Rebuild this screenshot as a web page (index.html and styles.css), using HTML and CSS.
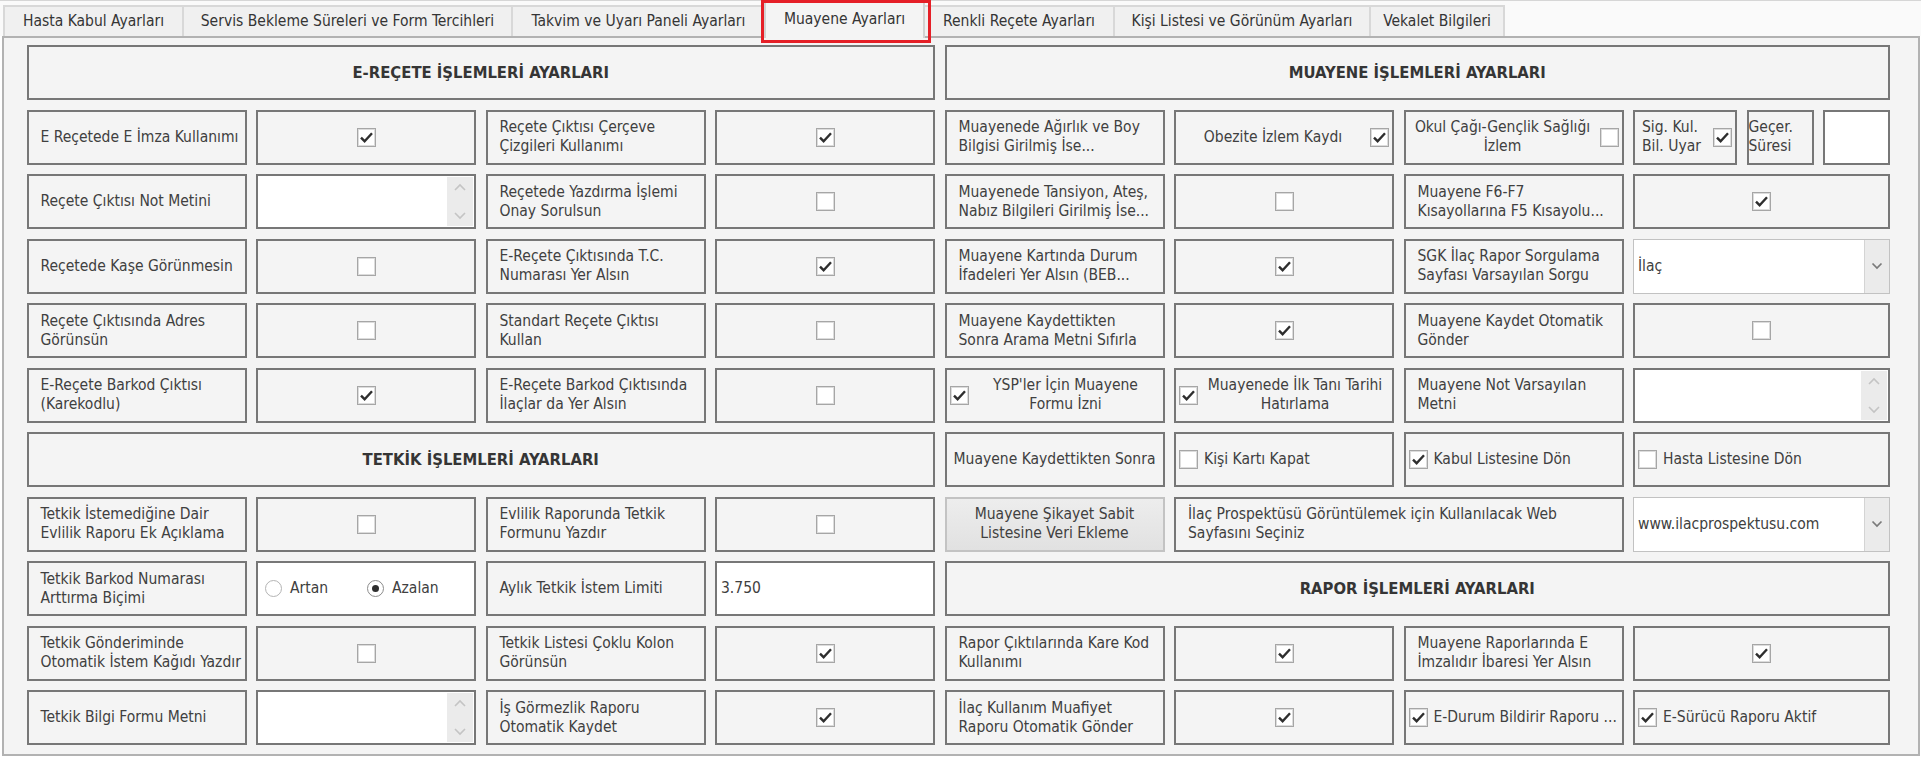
FILE: index.html
```html
<!DOCTYPE html>
<html lang="tr">
<head>
<meta charset="utf-8">
<title>Muayene Ayarları</title>
<link rel="stylesheet" href="styles.css">
</head>
<body>
<div class="tabs">
  <div class="tab t1">Hasta Kabul Ayarları</div>
  <div class="tab t2">Servis Bekleme Süreleri ve Form Tercihleri</div>
  <div class="tab t3">Takvim ve Uyarı Paneli Ayarları</div>
  <div class="tab t4 active">Muayene Ayarları</div>
  <div class="tab t5">Renkli Reçete Ayarları</div>
  <div class="tab t6">Kişi Listesi ve Görünüm Ayarları</div>
  <div class="tab t7">Vekalet Bilgileri</div>
</div>
<div class="highlight"></div>
<div class="panel">
  <div class="grid">
    <!-- row 0 -->
    <div class="c hd">E-REÇETE İŞLEMLERİ AYARLARI</div>
    <div class="c hd">MUAYENE İŞLEMLERİ AYARLARI</div>

    <!-- row 1 -->
    <div class="c lbl">E Reçetede E İmza Kullanımı</div>
    <div class="c val"><span class="cb on"><svg viewBox="0 0 15 15"><path d="M2 7.6 5.6 11.2 13 3.2"/></svg></span></div>
    <div class="c lbl">Reçete Çıktısı Çerçeve<br>Çizgileri Kullanımı</div>
    <div class="c val"><span class="cb on"><svg viewBox="0 0 15 15"><path d="M2 7.6 5.6 11.2 13 3.2"/></svg></span></div>
    <div class="c lbl">Muayenede Ağırlık ve Boy<br>Bilgisi Girilmiş İse...</div>
    <div class="c cbr"><span class="txt">Obezite İzlem Kaydı</span><span class="cb on"><svg viewBox="0 0 15 15"><path d="M2 7.6 5.6 11.2 13 3.2"/></svg></span></div>
    <div class="c cbr"><span class="txt">Okul Çağı-Gençlik Sağlığı<br>İzlem</span><span class="cb"></span></div>
    <div class="split">
      <div class="c cbr sig"><span class="txt start">Sig. Kul.<br>Bil. Uyar</span><span class="cb on"><svg viewBox="0 0 15 15"><path d="M2 7.6 5.6 11.2 13 3.2"/></svg></span></div>
      <div class="c gec">Geçer.<br>Süresi</div>
      <div class="c input"></div>
    </div>

    <!-- row 2 -->
    <div class="c lbl">Reçete Çıktısı Not Metini</div>
    <div class="c ta"><div class="sb"><svg class="chev" viewBox="0 0 12 8"><path d="M1 7 6 2 11 7"/></svg><svg class="chev" viewBox="0 0 12 8"><path d="M1 1 6 6 11 1"/></svg></div></div>
    <div class="c lbl">Reçetede Yazdırma İşlemi<br>Onay Sorulsun</div>
    <div class="c val"><span class="cb"></span></div>
    <div class="c lbl">Muayenede Tansiyon, Ateş,<br>Nabız Bilgileri Girilmiş İse...</div>
    <div class="c val"><span class="cb"></span></div>
    <div class="c lbl">Muayene F6-F7<br>Kısayollarına F5 Kısayolu...</div>
    <div class="c val"><span class="cb on"><svg viewBox="0 0 15 15"><path d="M2 7.6 5.6 11.2 13 3.2"/></svg></span></div>

    <!-- row 3 -->
    <div class="c lbl">Reçetede Kaşe Görünmesin</div>
    <div class="c val"><span class="cb"></span></div>
    <div class="c lbl">E-Reçete Çıktısında T.C.<br>Numarası Yer Alsın</div>
    <div class="c val"><span class="cb on"><svg viewBox="0 0 15 15"><path d="M2 7.6 5.6 11.2 13 3.2"/></svg></span></div>
    <div class="c lbl">Muayene Kartında Durum<br>İfadeleri Yer Alsın (BEB...</div>
    <div class="c val"><span class="cb on"><svg viewBox="0 0 15 15"><path d="M2 7.6 5.6 11.2 13 3.2"/></svg></span></div>
    <div class="c lbl">SGK İlaç Rapor Sorgulama<br>Sayfası Varsayılan Sorgu</div>
    <div class="combo"><span class="ctext">İlaç</span><span class="dd"><svg class="dchev" viewBox="0 0 12 8"><path d="M1.5 1.5 6 6 10.5 1.5"/></svg></span></div>

    <!-- row 4 -->
    <div class="c lbl">Reçete Çıktısında Adres<br>Görünsün</div>
    <div class="c val"><span class="cb"></span></div>
    <div class="c lbl">Standart Reçete Çıktısı<br>Kullan</div>
    <div class="c val"><span class="cb"></span></div>
    <div class="c lbl">Muayene Kaydettikten<br>Sonra Arama Metni Sıfırla</div>
    <div class="c val"><span class="cb on"><svg viewBox="0 0 15 15"><path d="M2 7.6 5.6 11.2 13 3.2"/></svg></span></div>
    <div class="c lbl">Muayene Kaydet Otomatik<br>Gönder</div>
    <div class="c val"><span class="cb"></span></div>

    <!-- row 5 -->
    <div class="c lbl">E-Reçete Barkod Çıktısı<br>(Karekodlu)</div>
    <div class="c val"><span class="cb on"><svg viewBox="0 0 15 15"><path d="M2 7.6 5.6 11.2 13 3.2"/></svg></span></div>
    <div class="c lbl">E-Reçete Barkod Çıktısında<br>İlaçlar da Yer Alsın</div>
    <div class="c val"><span class="cb"></span></div>
    <div class="c cbl"><span class="cb on"><svg viewBox="0 0 15 15"><path d="M2 7.6 5.6 11.2 13 3.2"/></svg></span><span class="txt">YSP'ler İçin Muayene<br>Formu İzni</span></div>
    <div class="c cbl"><span class="cb on"><svg viewBox="0 0 15 15"><path d="M2 7.6 5.6 11.2 13 3.2"/></svg></span><span class="txt">Muayenede İlk Tanı Tarihi<br>Hatırlama</span></div>
    <div class="c lbl">Muayene Not Varsayılan<br>Metni</div>
    <div class="c ta"><div class="sb"><svg class="chev" viewBox="0 0 12 8"><path d="M1 7 6 2 11 7"/></svg><svg class="chev" viewBox="0 0 12 8"><path d="M1 1 6 6 11 1"/></svg></div></div>

    <!-- row 6 -->
    <div class="c hd">TETKİK İŞLEMLERİ AYARLARI</div>
    <div class="c lbl mid">Muayene Kaydettikten Sonra</div>
    <div class="c inl"><span class="cb"></span><span>Kişi Kartı Kapat</span></div>
    <div class="c inl"><span class="cb on"><svg viewBox="0 0 15 15"><path d="M2 7.6 5.6 11.2 13 3.2"/></svg></span><span>Kabul Listesine Dön</span></div>
    <div class="c inl"><span class="cb"></span><span>Hasta Listesine Dön</span></div>

    <!-- row 7 -->
    <div class="c lbl">Tetkik İstemediğine Dair<br>Evlilik Raporu Ek Açıklama</div>
    <div class="c val"><span class="cb"></span></div>
    <div class="c lbl">Evlilik Raporunda Tetkik<br>Formunu Yazdır</div>
    <div class="c val"><span class="cb"></span></div>
    <div class="c btn">Muayene Şikayet Sabit<br>Listesine Veri Ekleme</div>
    <div class="c lbl wide">İlaç Prospektüsü Görüntülemek için Kullanılacak Web<br>Sayfasını Seçiniz</div>
    <div class="combo"><span class="ctext">www.ilacprospektusu.com</span><span class="dd"><svg class="dchev" viewBox="0 0 12 8"><path d="M1.5 1.5 6 6 10.5 1.5"/></svg></span></div>

    <!-- row 8 -->
    <div class="c lbl">Tetkik Barkod Numarası<br>Arttırma Biçimi</div>
    <div class="c radios">
      <span class="ropt"><span class="rb"></span>Artan</span>
      <span class="ropt"><span class="rb sel"></span>Azalan</span>
    </div>
    <div class="c lbl">Aylık Tetkik İstem Limiti</div>
    <div class="c input">3.750</div>
    <div class="c hd">RAPOR İŞLEMLERİ AYARLARI</div>

    <!-- row 9 -->
    <div class="c lbl">Tetkik Gönderiminde<br>Otomatik İstem Kağıdı Yazdır</div>
    <div class="c val"><span class="cb"></span></div>
    <div class="c lbl">Tetkik Listesi Çoklu Kolon<br>Görünsün</div>
    <div class="c val"><span class="cb on"><svg viewBox="0 0 15 15"><path d="M2 7.6 5.6 11.2 13 3.2"/></svg></span></div>
    <div class="c lbl">Rapor Çıktılarında Kare Kod<br>Kullanımı</div>
    <div class="c val"><span class="cb on"><svg viewBox="0 0 15 15"><path d="M2 7.6 5.6 11.2 13 3.2"/></svg></span></div>
    <div class="c lbl">Muayene Raporlarında E<br>İmzalıdır İbaresi Yer Alsın</div>
    <div class="c val"><span class="cb on"><svg viewBox="0 0 15 15"><path d="M2 7.6 5.6 11.2 13 3.2"/></svg></span></div>

    <!-- row 10 -->
    <div class="c lbl">Tetkik Bilgi Formu Metni</div>
    <div class="c ta"><div class="sb"><svg class="chev" viewBox="0 0 12 8"><path d="M1 7 6 2 11 7"/></svg><svg class="chev" viewBox="0 0 12 8"><path d="M1 1 6 6 11 1"/></svg></div></div>
    <div class="c lbl">İş Görmezlik Raporu<br>Otomatik Kaydet</div>
    <div class="c val"><span class="cb on"><svg viewBox="0 0 15 15"><path d="M2 7.6 5.6 11.2 13 3.2"/></svg></span></div>
    <div class="c lbl">İlaç Kullanım Muafiyet<br>Raporu Otomatik Gönder</div>
    <div class="c val"><span class="cb on"><svg viewBox="0 0 15 15"><path d="M2 7.6 5.6 11.2 13 3.2"/></svg></span></div>
    <div class="c inl"><span class="cb on"><svg viewBox="0 0 15 15"><path d="M2 7.6 5.6 11.2 13 3.2"/></svg></span><span>E-Durum Bildirir Raporu ...</span></div>
    <div class="c inl"><span class="cb on"><svg viewBox="0 0 15 15"><path d="M2 7.6 5.6 11.2 13 3.2"/></svg></span><span>E-Sürücü Raporu Aktif</span></div>
  </div>
</div>
</body>
</html>
```
FILE: styles.css
```css
html, body {
  margin: 0;
  padding: 0;
}
body {
  position: relative;
  background: #ffffff;
  font-family: "DejaVu Sans Condensed", "DejaVu Sans", sans-serif;
  font-stretch: condensed;
  font-size: 15.5px;
  line-height: 19px;
  color: #404040;
}

/* ---------- tab strip ---------- */
.tabs {
  display: flex;
  align-items: flex-end;
  height: 35px;
  padding-left: 3px;
  border-top: 1px solid #d6d6d6;
  background: #fafafa;
}
.tab {
  box-sizing: border-box;
  height: 31px;
  display: flex;
  align-items: center;
  justify-content: center;
  white-space: nowrap;
  background: #f0f0f0;
  border: 2px solid #d8d8d8;
  border-right: none;
  border-bottom: none;
  color: #353535;
}
.t1 { width: 179px; }
.t2 { width: 329px; }
.t3 { width: 253px; }
.t4 { width: 161px; }
.t5 { width: 190px; }
.t6 { width: 256px; }
.t7 { width: 136px; border-right: 2px solid #d8d8d8; }
.tab.active {
  position: relative;
  z-index: 1;
  height: 37px;
  margin-bottom: -2px;
  padding-bottom: 2px;
  background: #f4f4f4;
  border-color: #d2d2d2;
  border-right: 2px solid #d2d2d2;
  margin-right: -2px;
}

/* red annotation frame over the active tab */
.highlight {
  position: absolute;
  left: 761px;
  top: 0;
  width: 170px;
  height: 43px;
  box-sizing: border-box;
  border: 3px solid #e51f27;
  z-index: 5;
}

/* ---------- panel ---------- */
.panel {
  box-sizing: border-box;
  width: 1918px;
  height: 720px;
  margin-left: 2px;
  border: 2px solid #b2b2b2;
  background: #f4f4f4;
  padding: 7px 0 0 22.5px;
}
.grid {
  display: grid;
  grid-template-columns: repeat(7, 220px) 257px;
  grid-auto-rows: 55px;
  gap: 9.5px;
}

/* generic bordered cell */
.c {
  box-sizing: border-box;
  border: 2px solid #777777;
  background: #f4f4f4;
  display: flex;
  align-items: center;
  overflow: hidden;
  white-space: nowrap;
}
.hd {
  grid-column: span 4;
  justify-content: center;
  font-weight: bold;
  font-size: 16.5px;
  color: #353535;
}
.lbl {
  padding-left: 12px;
}
.lbl.mid {
  padding-left: 0;
  justify-content: center;
}
.lbl.wide {
  grid-column: span 2;
}
.gec {
  padding-left: 0;
}
.val {
  justify-content: center;
}

/* checkbox */
.cb {
  box-sizing: border-box;
  flex: none;
  width: 19px;
  height: 19px;
  background: #ffffff;
  border: 1px solid #a6a6a6;
  box-shadow: inset 0 0 0 1px #dcdcdc;
  display: flex;
  align-items: center;
  justify-content: center;
}
.cb svg {
  width: 15px;
  height: 15px;
}
.cb svg path {
  fill: none;
  stroke: #2e2e2e;
  stroke-width: 2.4;
}

/* label + checkbox on the right */
.cbr {
  padding-right: 3px;
}
.cbr .txt,
.cbl .txt {
  flex: 1;
  text-align: center;
}
.cbr .txt.start {
  text-align: left;
  padding-left: 7px;
}
.cbl {
  padding-left: 3px;
}

/* inline checkbox + text */
.inl {
  padding-left: 3px;
  gap: 6px;
}

.split {
  display: grid;
  grid-template-columns: 104px 67px 67px;
  gap: 9.5px;
}

/* white inputs */
.input {
  background: #ffffff;
  padding-left: 4px;
}
.ta {
  background: #ffffff;
  justify-content: flex-end;
  align-items: stretch;
  padding: 1px 1px 1px 0;
}
.sb {
  width: 26px;
  background: #ebebeb;
  display: flex;
  flex-direction: column;
  justify-content: space-between;
  align-items: center;
  padding: 6px 0;
  box-sizing: border-box;
}
.chev {
  width: 12px;
  height: 8px;
}
.chev path {
  fill: none;
  stroke: #c4c4c4;
  stroke-width: 1.6;
}

/* combo box */
.combo {
  box-sizing: border-box;
  display: flex;
  align-items: center;
  justify-content: space-between;
  background: #ffffff;
  border: 1px solid #c2c2c2;
  padding-left: 4px;
  white-space: nowrap;
}
.dd {
  align-self: stretch;
  width: 24px;
  background: #ebebeb;
  border-left: 1px solid #d4d4d4;
  display: flex;
  align-items: center;
  justify-content: center;
}
.dchev {
  width: 12px;
  height: 8px;
}
.dchev path {
  fill: none;
  stroke: #7a7a7a;
  stroke-width: 1.7;
}

/* radio group */
.radios {
  background: #ffffff;
  padding-left: 7px;
}
.ropt {
  display: flex;
  align-items: center;
  gap: 8px;
  width: 102px;
}
.rb {
  box-sizing: border-box;
  width: 17px;
  height: 17px;
  border-radius: 50%;
  border: 1.5px solid #b4b4b4;
  background: #ffffff;
  display: flex;
  align-items: center;
  justify-content: center;
}
.rb.sel {
  border-color: #8c8c8c;
}
.rb.sel::after {
  content: "";
  width: 7px;
  height: 7px;
  border-radius: 50%;
  background: #2e2e2e;
}

/* button */
.btn {
  justify-content: center;
  text-align: center;
  background: linear-gradient(#ededed, #e1e1e1);
  border-color: #c3c3c3;
}
```
